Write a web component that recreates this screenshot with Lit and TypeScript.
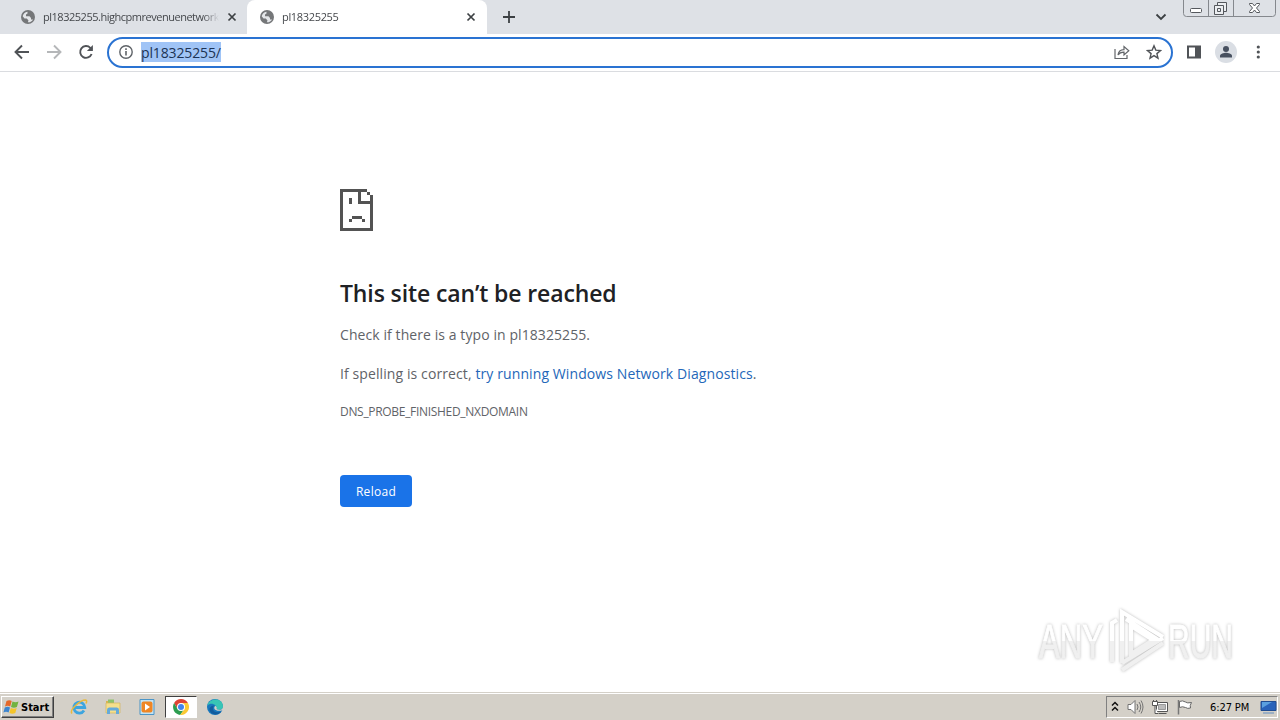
import { LitElement, html, svg, css } from 'lit';
import { customElement, property } from 'lit/decorators.js';

const globe = html`
  <svg class="globe" width="14" height="14" viewBox="0 0 14 14">
    <circle cx="7" cy="7" r="7" fill="#757779" />
    <path d="M1.700 6.300C2 4 4 2 6.500 1.700V3.500L5 4.500V6.300h3.500L10 8v1.500h2C11 11.500 9 12.500 6.800 12.300L7.500 10.500 5.800 8.500H3.500Z" fill="#e4e6e9" />
  </svg>
`;

@customElement('browser-tab')
class BrowserTab extends LitElement {
  @property() name = '';

  @property({ type: Boolean, reflect: true }) active = false;

  static styles = css`
    :host {
      display: flex;
      align-items: center;
      box-sizing: border-box;
      height: 34px;
      width: 247px;
      padding: 0 9px 0 21px;
      font: 11px 'Open Sans', sans-serif;
      letter-spacing: -0.480px;
      color: #45484c;
    }

    :host([active]) {
      width: 240px;
      padding: 0 10px 0 13px;
      background: #fff;
      border-radius: 8px 8px 0 0;
      letter-spacing: -0.330px;
    }

    .title {
      flex: 1;
      margin: 0 7px 0 8px;
      overflow: hidden;
      white-space: nowrap;
      line-height: 16px;
      mask-image: linear-gradient(to right, #000 91%, transparent);
    }

    .globe {
      flex: none;
    }

    .close {
      flex: none;
    }
  `;

  render() {
    return html`
      ${globe}
      <span class="title">${this.name}</span>
      <svg class="close" width="12" height="12" viewBox="0 0 12 12">
        <path d="M2.500 2.500l7 7M9.500 2.500l-7 7" stroke="#3c4043" stroke-width="1.700" />
      </svg>
    `;
  }
}

@customElement('browser-toolbar')
class BrowserToolbar extends LitElement {
  static styles = css`
    :host {
      display: flex;
      align-items: center;
      box-sizing: border-box;
      height: 38px;
      padding: 0 0 0 12px;
      background: #fff;
      border-bottom: 1px solid #dadce0;
    }

    svg {
      display: block;
      flex: none;
    }

    .nav {
      display: flex;
      gap: 12px;
      margin-right: 11px;
      padding-bottom: 1px;
    }

    .address {
      display: flex;
      flex: none;
      align-items: center;
      box-sizing: border-box;
      width: 1066px;
      height: 31px;
      padding: 0 9px 1px;
      border: 2px solid #2a73d2;
      border-radius: 16px;
    }

    .url {
      height: 20px;
      margin-left: 7px;
      font: 14px/21px 'Open Sans', sans-serif;
      letter-spacing: -0.130px;
      color: #1c3354;
      background: #a0c4f6;
    }

    .actions {
      display: flex;
      gap: 16px;
      margin-left: auto;
    }

    .side {
      display: flex;
      align-items: center;
      gap: 13px;
      margin-left: 13px;
      padding-bottom: 1px;
    }
  `;

  render() {
    return html`
      <div class="nav">
        <svg width="20" height="20" viewBox="0 0 20 20" fill="none" stroke="#505357" stroke-width="1.900">
          <path d="M17 10H4M10 3.500L3.500 10l6.500 6.500" />
        </svg>
        <svg width="20" height="20" viewBox="0 0 20 20" fill="none" stroke="#b5b7b9" stroke-width="1.900">
          <path d="M3 10h13M10 3.500l6.500 6.500-6.500 6.500" />
        </svg>
        <svg width="20" height="20" viewBox="0 0 20 20" fill="none" stroke="#505357" stroke-width="1.900">
          <path d="M15.600 12A5.900 5.900 0 1 1 14.300 5.800L16 7.500" />
          <path d="M16.900 3v6h-6z" fill="#505357" stroke="none" />
        </svg>
      </div>
      <div class="address">
        <svg width="16" height="16" viewBox="0 0 16 16">
          <circle cx="8" cy="8" r="6.200" fill="none" stroke="#5f6368" stroke-width="1.400" />
          <path d="M8 7v4.500M8 4.300v1.600" stroke="#5f6368" stroke-width="1.600" />
        </svg>
        <span class="url">pl18325255/</span>
        <div class="actions">
          <svg width="16" height="16" viewBox="0 0 16 16" fill="none" stroke="#63666a" stroke-width="1.200">
            <path d="M1 5v9.500h12V11M4 11c.4-3.600 2.400-5.300 6-5.400V2.500l4.800 4.300-4.800 4.200V8.200C7.300 8.100 5.400 9 4 11Z" />
          </svg>
          <svg width="16" height="16" viewBox="0 0 16 16" fill="none" stroke="#505357" stroke-width="1.400">
            <path d="M8 1.800l1.800 4.300 4.700.4-3.600 3.100 1.100 4.600L8 11.700l-4 2.500 1.100-4.600-3.600-3.100 4.700-.4Z" />
          </svg>
        </div>
      </div>
      <div class="side">
        <svg width="16" height="16" viewBox="0 0 16 16">
          <path d="M1 1.500h14v13H1ZM3 3.500v9h6v-9Z" fill="#505357" fill-rule="evenodd" />
        </svg>
        <svg width="22" height="22" viewBox="0 0 22 22">
          <circle cx="11" cy="11" r="11" fill="#dadee4" />
          <circle cx="11" cy="8" r="3" fill="#47505f" />
          <path d="M5 16.500v-1.700c0-2 4-3 6-3s6 1 6 3v1.700Z" fill="#47505f" />
        </svg>
        <svg width="20" height="20" viewBox="0 0 20 20" fill="#505357">
          <circle cx="8.300" cy="5" r="1.600" />
          <circle cx="8.300" cy="10" r="1.600" />
          <circle cx="8.300" cy="15" r="1.600" />
        </svg>
      </div>
    `;
  }
}

@customElement('error-page')
class ErrorPage extends LitElement {
  static styles = css`
    :host {
      display: block;
      box-sizing: border-box;
      padding: 117px 0 0 340px;
      font-family: 'Open Sans', sans-serif;
      font-size: 14px;
      color: #5f6368;
      white-space: nowrap;
    }

    .sad {
      display: block;
    }

    h1 {
      margin: 47px 0 0;
      font-size: 23px;
      font-weight: 600;
      line-height: 30px;
      letter-spacing: -0.120px;
      color: #202124;
    }

    p {
      margin: 0;
      line-height: 20px;
    }

    .typo {
      margin-top: 17px;
      letter-spacing: 0.080px;
    }

    .spelling {
      margin-top: 19px;
      letter-spacing: 0.100px;
    }

    .link {
      color: #2467b9;
    }

    .code {
      margin-top: 18px;
      font-size: 12px;
      letter-spacing: -0.310px;
    }

    .reload {
      display: block;
      width: 72px;
      height: 32px;
      margin-top: 53px;
      padding: 0;
      border: 0;
      border-radius: 4px;
      background: #1a73e8;
      color: #fff;
      font: 12px 'Open Sans', sans-serif;
      letter-spacing: 0.300px;
    }
  `;

  render() {
    return html`
      <svg class="sad" width="33" height="42" viewBox="0 0 33 42" shape-rendering="crispEdges" fill="#535353">
        <path d="M0 0h27v3H3v36h27V15H18V0h3v12h9V6h3v36H0Z" />
        <path d="M27 3h3v3h-3zM9 9h3v6H9zM12 27h10v3H12zM9 30h3v3H9zM22 30h3v3h-3z" />
      </svg>
      <h1>This site can’t be reached</h1>
      <p class="typo">Check if there is a typo in pl18325255.</p>
      <p class="spelling">If spelling is correct, <span class="link">try running Windows Network Diagnostics</span>.</p>
      <p class="code">DNS_PROBE_FINISHED_NXDOMAIN</p>
      <button class="reload">Reload</button>
    `;
  }
}

/* Play mark: the inner triangle with its offset blades */
const mark = svg`
  <path d="M74 53V14l5-3M84 54V3l41 25M88 10l34 22M93 17v28l22-14ZM84 54l41-25M84 61l41-27" />
`;

@customElement('run-watermark')
class RunWatermark extends LitElement {
  static styles = css`
    :host {
      display: block;
    }

    svg {
      display: block;
      overflow: visible;
      filter: drop-shadow(0 0 1.500px #bbb);
    }

    text {
      font: 48px 'Liberation Sans Narrow', 'Liberation Sans', sans-serif;
    }
  `;

  render() {
    return html`
      <svg width="196" height="66" viewBox="0 0 196 66">
        <defs>
          <linearGradient id="face" gradientUnits="userSpaceOnUse" x1="0" y1="0" x2="0" y2="66">
            <stop offset="0.480" stop-color="#fff" />
            <stop offset="0.480" stop-color="#f0f0f0" />
          </linearGradient>
        </defs>
        <text x="1" y="49" textLength="64" lengthAdjust="spacingAndGlyphs" fill="url(#face)" stroke="url(#face)">ANY</text>
        <g fill="none" stroke="url(#face)" stroke-width="4">${mark}</g>
        <text x="130" y="49" textLength="65" lengthAdjust="spacingAndGlyphs" fill="url(#face)" stroke="url(#face)">RUN</text>
      </svg>
    `;
  }
}

@customElement('task-bar')
class TaskBar extends LitElement {
  static styles = css`
    :host {
      display: flex;
      align-items: center;
      box-sizing: border-box;
      height: 28px;
      padding: 1px 2px 0 1px;
      background: #d4d0c8;
      border-top: 1px solid #d4d0c8;
      box-shadow: inset 0 1px #fff;
      font: 11px 'DejaVu Sans Condensed', 'DejaVu Sans', sans-serif;
      color: #000;
    }

    svg {
      display: block;
      flex: none;
    }

    .start {
      display: flex;
      align-items: center;
      gap: 1px;
      box-sizing: border-box;
      width: 53px;
      height: 22px;
      padding: 0 0 0 1px;
      border: 1px solid;
      border-color: #fff #404040 #404040 #fff;
      box-shadow: inset -1px -1px #808080;
      font-weight: 700;
      letter-spacing: 0;
    }

    .apps {
      display: flex;
      align-items: center;
      margin-left: 8px;
    }

    .app {
      display: flex;
      align-items: center;
      justify-content: center;
      box-sizing: border-box;
      width: 34px;
      height: 22px;
    }

    .pressed {
      width: 32px;
      margin: 0 1px;
      background: #fff;
      border: 1px solid;
      border-color: #404040 #fff #fff #404040;
    }

    .tray {
      display: flex;
      align-items: center;
      box-sizing: border-box;
      width: 172px;
      height: 22px;
      margin-left: auto;
      padding-left: 4px;
      border: 1px solid;
      border-color: #808080 #fff #fff #808080;
    }

    .icons {
      display: flex;
      align-items: center;
      gap: 8px;
    }

    .clock {
      margin: 0 auto 0 17px;
      letter-spacing: -0.100px;
      white-space: nowrap;
    }
  `;

  render() {
    return html`
      <div class="start">
        <svg width="17" height="16" viewBox="0 0 17 16">
          <path d="M3.500 2q3-1.700 5.200 0L7.200 7.500q-2.500-1.500-5.200 0Z" fill="#e5682a" />
          <path d="M9.500 2.500q3 1.600 6 0L13.900 8q-3 1.500-5.900 0Z" fill="#71b342" />
          <path d="M1.800 8.500q3-1.500 5.200 0L5.600 13.500q-2.500-1.500-5.200 0Z" fill="#3d85cf" />
          <path d="M7.800 9q3 1.500 5.900 0L12.300 14q-3 1.600-5.900 0Z" fill="#f4c52b" />
        </svg>
        <span>Start</span>
      </div>
      <div class="apps">
        <div class="app">
          <svg width="18" height="18" viewBox="0 0 18 18" fill="none">
            <path d="M14 12.500A5.500 5.500 0 1 1 14.800 9.500H5" stroke="#3da5df" stroke-width="2.800" />
            <path d="M2 15.500C-1 12 10 2 15.500 2q2 .2.500 3.500" stroke="#e9b93d" stroke-width="1.500" />
          </svg>
        </div>
        <div class="app">
          <svg width="18" height="18" viewBox="0 0 18 18">
            <path d="M2 3h5l1 2h7v10H2Z" fill="#d9b450" />
            <path d="M4 1.500h6V6H4Z" fill="#8ec26b" />
            <path d="M2 5h14v10H2Z" fill="#f5df8c" stroke="#d3b45d" stroke-width=".7" />
            <path d="M3 16v-4q0-2.500 2-2.500h8q2 0 2 2.500v4h-3v-3.500H6V16Z" fill="#65aada" />
          </svg>
        </div>
        <div class="app">
          <svg width="18" height="18" viewBox="0 0 18 18">
            <path d="M2 1.500h14v15H2Z" fill="#c3e3f3" stroke="#4b95c7" />
            <rect x="3.500" y="3.500" width="11" height="11" rx="2" fill="#ef8624" />
            <path d="M7 5.500v7l5-3.500Z" fill="#fff" />
          </svg>
        </div>
        <div class="app pressed">
          <svg width="16" height="16" viewBox="0 0 16 16">
            <path d="M1.100 4A8 8 0 0 1 14.900 4H8L4.500 10Z" fill="#df4435" />
            <path d="M1.100 4A8 8 0 0 0 7.200 15.950L11.400 10 8 8 4.600 10Z" fill="#2c9d50" />
            <path d="M14.900 4A8 8 0 0 1 7.200 15.950L11.500 10 8 4Z" fill="#fbc934" />
            <circle cx="8" cy="8" r="4" fill="#fff" />
            <circle cx="8" cy="8" r="3" fill="#4284ed" />
          </svg>
        </div>
        <div class="app">
          <svg width="16" height="16" viewBox="0 0 16 16">
            <circle cx="8" cy="8" r="8" fill="#1878bd" />
            <path d="M.3 6.500C2-1.500 16-2 16 7.500c0 3.500-5 4-6.500 2.500C11 7 5 2 .3 6.500Z" fill="#38c5b5" />
            <path d="M7 6.500c-3 4 .5 8.500 7.500 6C10 18 2 15 2.500 9.500Q4 6.500 7 6.500Z" fill="#135c9d" />
            <path d="M8.200 6.700c-2.500 2.700 0 6 6.500 4.800l1.300 0V8c0 3-5 3.500-6.500 2 .8-1 .2-2.500-1.300-3.300Z" fill="#d4d0c8" />
          </svg>
        </div>
      </div>
      <div class="tray">
        <div class="icons">
          <svg width="8" height="12" viewBox="0 0 8 12" fill="none" stroke="#111" stroke-width="1.500">
            <path d="M1 4.500l3-3 3 3M1 9.500l3-3 3 3" />
          </svg>
          <svg width="17" height="16" viewBox="0 0 17 16" fill="none" stroke="#737373">
            <path d="M1 5.500h3l4-4v13l-4-4H1Z" fill="#fff" />
            <path d="M10 5q2 3 0 6M12 3q3.500 5 0 10M14 1.500q4 6.500 0 13" />
          </svg>
          <svg width="17" height="16" viewBox="0 0 17 16" fill="none" stroke="#555">
            <path d="M4.500 3.500h11v9h-11ZM6.500 14.500h8" fill="#fff" />
            <path d="M6.500 5.500h7v5h-7Z" fill="#bbb" stroke="#999" />
            <path d="M1.500 3V1M4.500 3V1M.5 2.500h5v4h-5ZM3 7v7.500h3" fill="#fff" />
          </svg>
          <svg width="16" height="16" viewBox="0 0 16 16" stroke="#666">
            <path d="M2.500 2.500q3-1.500 6 .5 1.500 1.500 6 .5-2 3-1 5.500-3 1-5-.5-3-1.500-6 0Z" fill="#fff" />
            <path d="M1.500 1v14.500" stroke="#777" stroke-width="1.500" />
          </svg>
        </div>
        <span class="clock">6:27 PM</span>
        <svg width="17" height="16" viewBox="0 0 17 16">
          <path d="M1 2.500h15v9H1Z" fill="#2862ba" stroke="#204c91" />
          <path d="M2 3h10L2 9Z" fill="#5aa0e0" />
          <path d="M3 14h11" stroke="#9bafc4" stroke-width="2" />
        </svg>
      </div>
    `;
  }
}

@customElement('app-root')
class AppRoot extends LitElement {
  static styles = css`
    :host {
      display: flex;
      flex-direction: column;
      position: relative;
      width: 1280px;
      height: 720px;
      overflow: hidden;
      background: #fff;
    }

    .strip {
      display: flex;
      align-items: center;
      height: 34px;
      background: #dee1e6;
    }

    .plus {
      margin-left: 15px;
    }

    .chevron {
      margin: 0 16px 0 auto;
    }

    .window {
      align-self: flex-start;
      margin-right: 4px;
    }

    .page {
      flex: 1;
    }

    /* The watermark floats over the page */
    .watermark {
      position: absolute;
      right: 46px;
      top: 609px;
    }
  `;

  render() {
    return html`
      <div class="strip">
        <browser-tab name="pl18325255.highcpmrevenuenetwork"></browser-tab>
        <browser-tab name="pl18325255" active></browser-tab>
        <svg class="plus" width="14" height="14" viewBox="0 0 14 14">
          <path d="M7 1v12M1 7h12" stroke="#3c4043" stroke-width="1.800" />
        </svg>
        <svg class="chevron" width="12" height="12" viewBox="0 0 12 12">
          <path d="M1.500 3.500L6 8l4.500-4.500" fill="none" stroke="#3c4043" stroke-width="1.800" />
        </svg>
        <svg class="window" width="93" height="17" viewBox="0 0 93 17" fill="none" stroke="#85888d">
          <path d="M.5 0v13.500q0 3 3 3h86q3 0 3-3V0M25.500 0v16M50.500 0v16" />
          <rect x="7.500" y="8.500" width="11" height="4" rx="1" stroke="#55585d" fill="#fff" />
          <g stroke="#55585d" fill="#eceef1">
            <path d="M34.500 2.500h9v9h-9Z" />
            <path d="M31.500 5.500h9v9h-9ZM34.500 8.500h3v3h-3Z" />
          </g>
          <path d="M66.500 3.500h3l2 2.500 2-2.500h3v1l-3 3.500 3 3.500v1h-3l-2-2.500-2 2.500h-3v-1l3-3.500-3-3.500Z" fill="#fff" stroke="#55585d" />
        </svg>
      </div>
      <browser-toolbar></browser-toolbar>
      <error-page class="page"></error-page>
      <run-watermark class="watermark"></run-watermark>
      <task-bar></task-bar>
    `;
  }
}
